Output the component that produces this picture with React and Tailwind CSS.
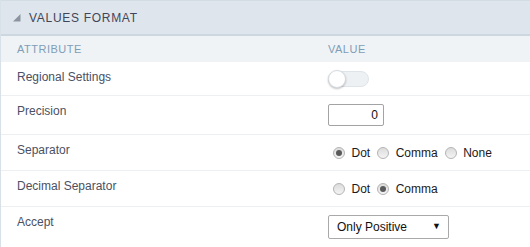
import React from "react";

function Radio({ checked, label }) {
  return (
    <label className="flex items-center h-[20px]">
      <span className="relative w-[12px] h-[12px] rounded-full border border-[#b4b4b4] bg-gradient-to-b from-[#dcdcdc] to-[#f4f4f4] flex items-center justify-center">
        {checked && <span className="w-[6px] h-[6px] rounded-full bg-[#5a5a5a]" />}
      </span>
      <span className="ml-[6.5px] text-[12px] text-[#1a1a1a]">{label}</span>
    </label>
  );
}

function Row({ label, h, children, last }) {
  return (
    <div className={`flex ${last ? "" : "border-b border-[#edf0f3]"} ${h}`}>
      <div className="w-[327px] pl-[16px] pt-[8px] text-[12px] leading-[14px] text-[#4b5063]">{label}</div>
      <div className="pt-[8px] flex-1">{children}</div>
    </div>
  );
}

export default function App() {
  return (
    <div className="w-[530px] h-[247px] bg-white overflow-hidden" style={{ fontFamily: '"Liberation Sans", Arial, sans-serif' }}>
      <div className="border-l border-[#d9e1e8] h-full">
        <div className="h-[36px] bg-[#dfe5ec] border-t border-[#d3dce3] border-b-2 border-b-[#cdd7df] flex items-center">
          <svg width="8" height="8" viewBox="0 0 8 8" className="ml-[12px] mt-[1px]">
            <polygon points="7.5,0 7.5,7.5 0,7.5" fill="#8c959f" />
          </svg>
          <span className="ml-[8px] text-[12px] tracking-[0.7px] text-[#3f4659]">VALUES FORMAT</span>
        </div>
        <div className="h-[26px] bg-[#eff3f6] flex items-center text-[11px] tracking-[0.5px] text-[#7f9db6]">
          <div className="w-[327px] pl-[16px]">ATTRIBUTE</div>
          <div>VALUE</div>
        </div>
        <Row label="Regional Settings" h="h-[34px]">
          <div className="mt-[1px] relative w-[41px] h-[16px] rounded-full bg-[#eef1f4] border border-[#dfe4e9]">
            <span className="absolute left-[-1px] top-[-2px] w-[18px] h-[18px] rounded-full bg-white border border-[#d6dbe0] shadow-[0_1px_2px_rgba(0,0,0,0.25)]" />
          </div>
        </Row>
        <Row label="Precision" h="h-[39px]">
          <div className="w-[56px] h-[22px] border border-[#a3a3a3] rounded-[2px] flex items-center justify-end pr-[5px] text-[12px] text-[#111]">0</div>
        </Row>
        <Row label="Separator" h="h-[36px]">
          <div className="flex items-center pl-[5px] gap-[7px]">
            <Radio checked label="Dot" />
            <Radio label="Comma" />
            <Radio label="None" />
          </div>
        </Row>
        <Row label="Decimal Separator" h="h-[36px]">
          <div className="flex items-center pl-[5px] gap-[7px]">
            <Radio label="Dot" />
            <Radio checked label="Comma" />
          </div>
        </Row>
        <Row label="Accept" h="h-[40px]" last>
          <div className="w-[121px] h-[24px] border border-[#a9a9a9] rounded-[2px] flex items-center justify-between pl-[8px] pr-[7px] text-[12px] text-[#111]">
            <span>Only Positive</span>
            <span className="text-[9px]">▼</span>
          </div>
        </Row>
      </div>
    </div>
  );
}
